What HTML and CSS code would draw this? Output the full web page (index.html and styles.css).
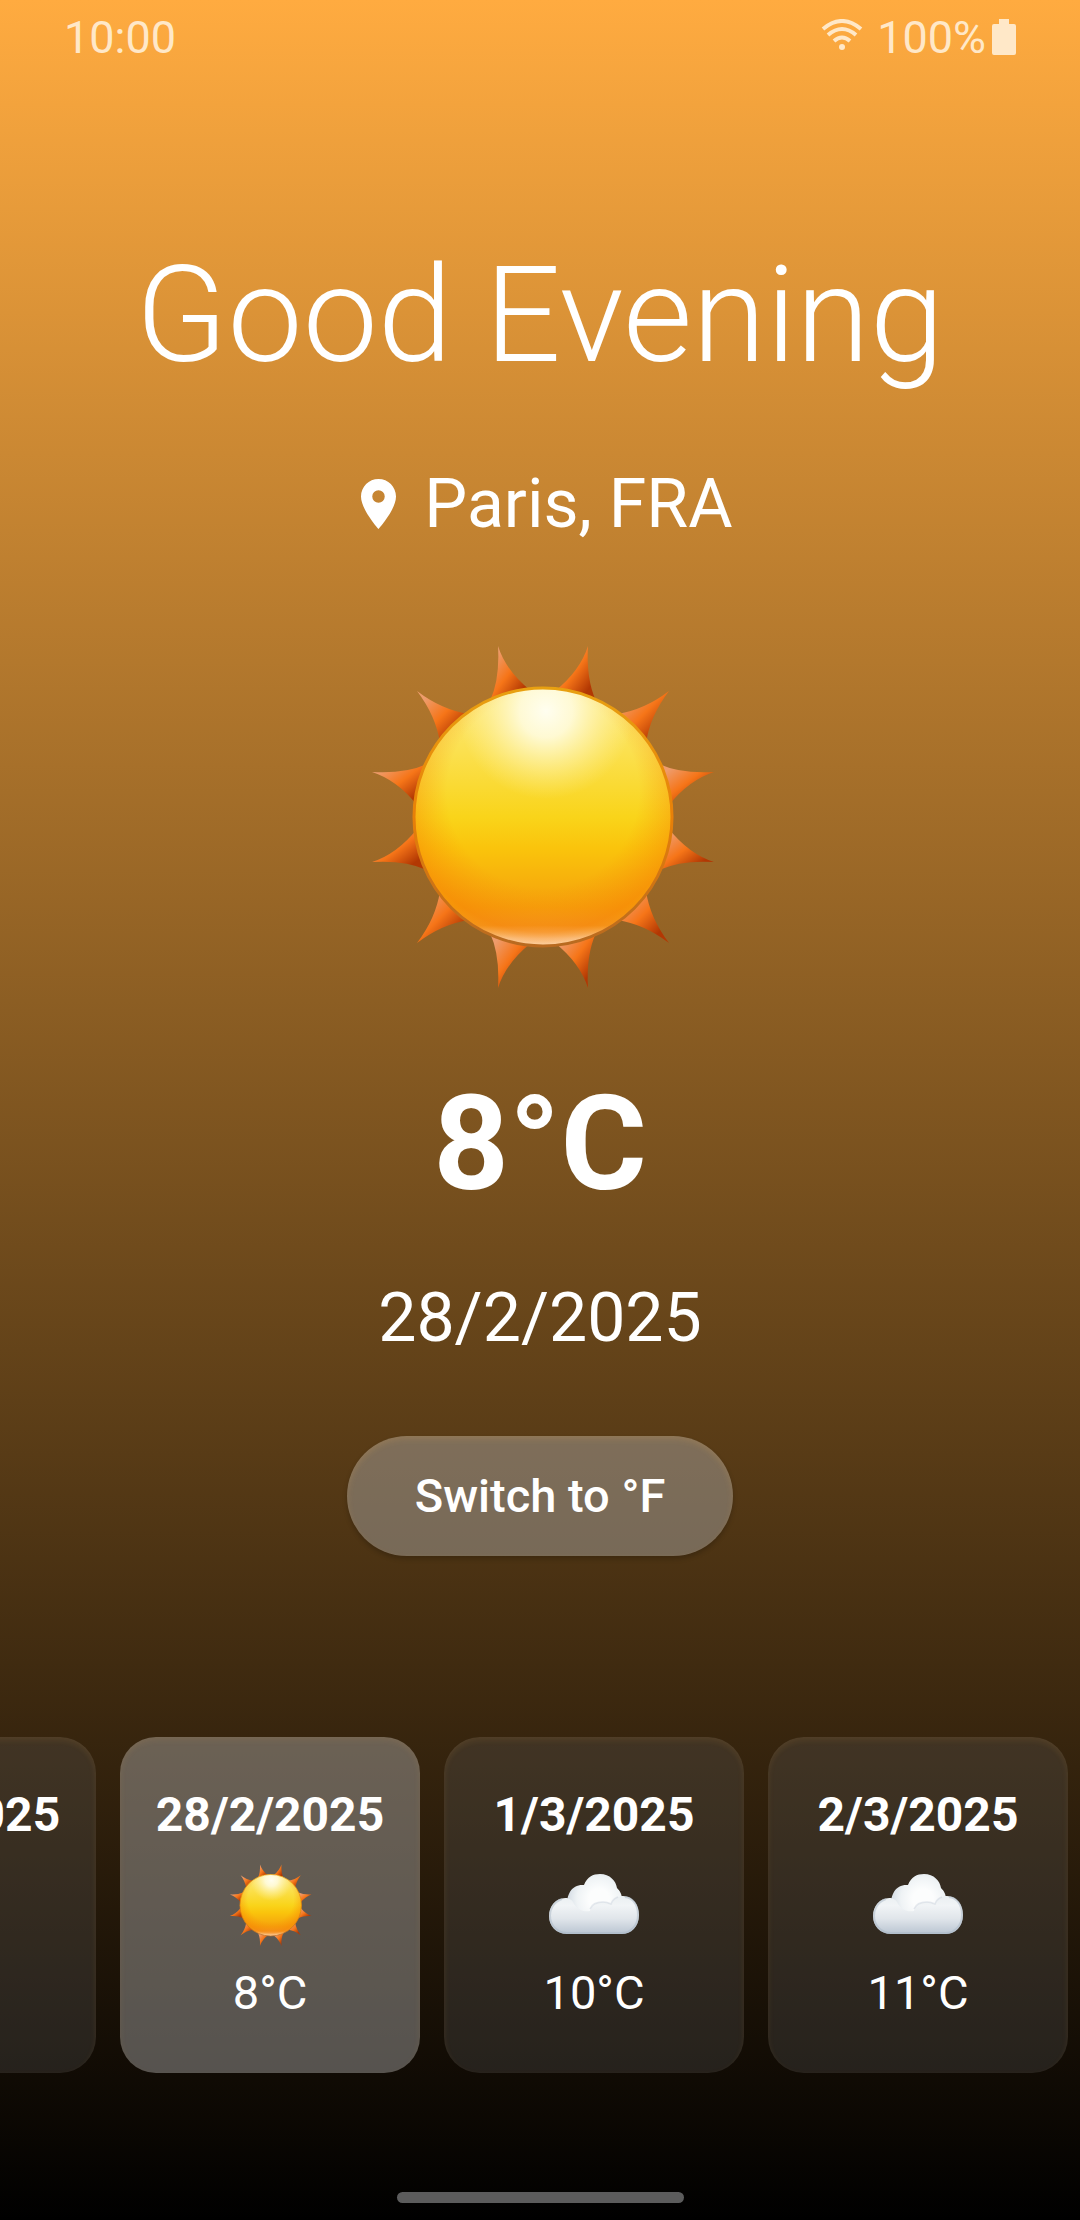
FILE: index.html
```html
<!DOCTYPE html>
<html lang="en">
<head>
<meta charset="utf-8">
<meta name="viewport" content="width=device-width, initial-scale=1">
<title>Weather</title>
<link rel="stylesheet" href="styles.css">
</head>
<body>
<svg class="defs" aria-hidden="true">
  <defs>
    <linearGradient id="ray" x1="0" y1="0" x2="1" y2="1">
      <stop offset="0.15" stop-color="#ee9c6c"/>
      <stop offset="0.48" stop-color="#f67518"/>
      <stop offset="0.8" stop-color="#b23803"/>
    </linearGradient>
    <linearGradient id="disc" x1="0" y1="0" x2="0" y2="1">
      <stop offset="0" stop-color="#fde87c"/>
      <stop offset="0.25" stop-color="#fbe04e"/>
      <stop offset="0.5" stop-color="#f9d41a"/>
      <stop offset="0.62" stop-color="#fac40c"/>
      <stop offset="0.85" stop-color="#f5a10c"/>
      <stop offset="0.92" stop-color="#f49a20"/>
      <stop offset="0.97" stop-color="#fcd0a0"/>
      <stop offset="1" stop-color="#fde0c0"/>
    </linearGradient>
    <radialGradient id="edge" cx="0.5" cy="0.4" r="0.62">
      <stop offset="0.6" stop-color="#f98a06" stop-opacity="0"/>
      <stop offset="0.88" stop-color="#f77f04" stop-opacity="0.5"/>
      <stop offset="1" stop-color="#f77f04" stop-opacity="0"/>
    </radialGradient>
    <radialGradient id="glow" gradientUnits="userSpaceOnUse" cx="3" cy="-106" r="88">
      <stop offset="0" stop-color="#fffef0"/>
      <stop offset="0.3" stop-color="#fffce0" stop-opacity="0.9"/>
      <stop offset="1" stop-color="#fff3a0" stop-opacity="0"/>
    </radialGradient>
    <linearGradient id="rim" x1="0" y1="0" x2="0" y2="1">
      <stop offset="0" stop-color="#e8a010"/>
      <stop offset="0.5" stop-color="#e88008"/>
      <stop offset="1" stop-color="#b86a20"/>
    </linearGradient>
    <radialGradient id="cloud-back" gradientUnits="userSpaceOnUse" cx="50" cy="25" r="34">
      <stop offset="0.3" stop-color="#fcfdfd"/>
      <stop offset="0.65" stop-color="#eff3f5"/>
      <stop offset="1" stop-color="#cfd8e1"/>
    </radialGradient>
    <linearGradient id="cloud-front" x1="0" y1="0" x2="0" y2="1">
      <stop offset="0" stop-color="#eaeff2"/>
      <stop offset="0.25" stop-color="#f1f4f6"/>
      <stop offset="0.6" stop-color="#e0e5ea"/>
      <stop offset="1" stop-color="#bac5d2"/>
    </linearGradient>
  </defs>
  <symbol id="sun" viewBox="-179 -177 352 352">
    <g fill="url(#ray)">
      <path d="M12-126Q37-146 45-171Q43-138 53-116Z"/>
      <path d="M74-103Q101-107 126-126Q107-101 103-74Z"/>
      <path d="M126-12Q146-37 171-45Q138-43 116-53Z"/>
      <path d="M126 12Q146 37 171 45Q138 43 116 53Z"/>
      <path d="M74 103Q101 107 126 126Q107 101 103 74Z"/>
      <path d="M12 126Q37 146 45 171Q43 138 53 116Z"/>
      <path d="M-12 126Q-37 146-45 171Q-43 138-53 116Z"/>
      <path d="M-74 103Q-101 107-126 126Q-107 101-103 74Z"/>
      <path d="M-126 12Q-146 37-171 45Q-138 43-116 53Z"/>
      <path d="M-126-12Q-146-37-171-45Q-138-43-116-53Z"/>
      <path d="M-74-103Q-101-107-126-126Q-107-101-103-74Z"/>
      <path d="M-12-126Q-37-146-45-171Q-43-138-53-116Z"/>
    </g>
    <circle r="129" fill="url(#disc)"/>
    <circle r="129" fill="url(#edge)"/>
    <circle r="129" fill="url(#glow)"/>
    <circle r="129" fill="none" stroke="url(#rim)" stroke-width="3"/>
  </symbol>
  <symbol id="cloud" viewBox="0 0 90 62">
    <path fill="url(#cloud-back)" d="M18 34C17 20 23 10 35 11C38 3 44 0 51 0C61 0 67 7 68 14C71 17 73 20 73 26L70 44H22Z"/>
    <path fill="url(#cloud-front)" d="M0 42C0 32 7 23 18 24C22 25 24 27 25 30C30 37 36 38 41 37C42 31 48 28 54 28Q59 28 62 30C65 24 70 22 74 22C84 22 90 31 90 41C90 53 82 60 73 60H18C7 60 0 52 0 42Z"/>
    <path fill="none" stroke="#cbd4dd" stroke-opacity="0.5" stroke-width="1.500" d="M41 35C43 30 48 28 54 28Q58 28 62 30C63 27 66 24 69 23"/>
    <path fill="none" stroke="#aab7c6" stroke-opacity="0.5" stroke-width="2" d="M76 23C85 24 89 32 89 41C89 52 81 59 73 59H18C8 59 1 51 1 42C1 34 6 27 13 25"/>
  </symbol>
</svg>
<header class="status">
  <time class="clock">10:00</time>
  <div class="system">
    <svg class="wifi" viewBox="0 0 42 32" fill="none" stroke="currentColor" stroke-width="4">
      <path d="M2 10Q21-6 40 10"/><path d="M7 16Q21 4 35 16"/><path d="M13 22Q21 15 29 22"/>
      <circle cx="21" cy="28" r="3" fill="currentColor" stroke="none"/>
    </svg>
    <span>100%</span>
    <svg class="battery" viewBox="0 0 24 36" fill="currentColor"><path d="M7 0H17V5H22Q24 5 24 7V34Q24 36 22 36H2Q0 36 0 34V7Q0 5 2 5H7Z"/></svg>
  </div>
</header>
<main class="weather">
  <h1 class="greeting">Good Evening</h1>
  <p class="place">
    <svg class="pin" viewBox="5 2 14 20" fill="currentColor"><path d="M12 2C8.130 2 5 5.130 5 9c0 5.250 7 13 7 13s7-7.750 7-13c0-3.870-3.130-7-7-7zm0 9.500a2.500 2.500 0 1 1 0-5 2.500 2.500 0 0 1 0 5z"/></svg>
    <span>Paris, FRA</span>
  </p>
  <svg class="sky" role="img" aria-label="Sunny"><use href="#sun"/></svg>
  <p class="temperature">8°C</p>
  <time class="date">28/2/2025</time>
  <button class="switch" type="button">Switch to °F</button>
</main>
<ul class="days">
  <li class="day"><time class="day-date">27/2/2025</time></li>
  <li class="day selected"><time class="day-date">28/2/2025</time><svg class="day-icon" role="img" aria-label="Sunny"><use href="#sun"/></svg><span>8°C</span></li>
  <li class="day"><time class="day-date">1/3/2025</time><svg class="day-icon wide" role="img" aria-label="Cloudy"><use href="#cloud"/></svg><span>10°C</span></li>
  <li class="day"><time class="day-date">2/3/2025</time><svg class="day-icon wide" role="img" aria-label="Cloudy"><use href="#cloud"/></svg><span>11°C</span></li>
</ul>
<footer class="nav"><span class="handle"></span></footer>
</body>
</html>
```
FILE: styles.css
```css
* {
  box-sizing: border-box;
}

body {
  display: flex;
  flex-direction: column;
  min-height: 100vh;
  margin: 0;
  overflow-x: hidden;
  background: linear-gradient(#ffab40, #000);
  color: #fff;
  font: 47px/56px Roboto, sans-serif;
}

h1,
p,
ul {
  margin: 0;
  padding: 0;
}

.defs {
  position: absolute;
  width: 0;
  height: 0;
}

.status {
  display: flex;
  justify-content: space-between;
  align-items: center;
  height: 76px;
  padding: 0 64px;
  color: #ffe8c8;
  font-size: 45px;
}

.system {
  display: flex;
  align-items: center;
  gap: 6px;
}

.wifi {
  width: 42px;
  height: 32px;
  margin: 0 8px 6px 0;
}

.battery {
  width: 24px;
  height: 36px;
  margin-bottom: 2px;
}

.weather {
  display: flex;
  flex-direction: column;
  align-items: center;
  padding-top: 162px;
}

.greeting {
  font-size: 134px;
  font-weight: 300;
  line-height: 156px;
}

.place {
  display: flex;
  align-items: center;
  gap: 28px;
  margin-top: 70px;
  padding-left: 14px;
  font-size: 68px;
  line-height: 80px;
}

.pin {
  width: 35px;
  height: 50px;
}

.sky {
  width: 352px;
  height: 352px;
  margin-top: 96px;
}

.temperature {
  margin-top: 74px;
  font-size: 132px;
  font-weight: 700;
  line-height: 156px;
}

.date {
  margin-top: 56px;
  font-size: 68px;
  line-height: 80px;
}

.switch {
  height: 120px;
  margin-top: 78px;
  padding: 0 68px;
  border: 0;
  border-radius: 60px;
  background: linear-gradient(rgba(255, 255, 255, 0.3), rgba(255, 255, 255, 0.3)) rgba(0, 0, 0, 0.2);
  box-shadow: 0 3px 5px rgba(0, 0, 0, 0.2), inset 0 3px 6px rgba(255, 180, 80, 0.16);
  color: inherit;
  font: 500 47px/56px Roboto, sans-serif;
}

.days {
  display: flex;
  gap: 24px;
  margin: 181px 0 0 -204px;
  list-style: none;
}

.day {
  display: flex;
  flex: none;
  flex-direction: column;
  align-items: center;
  width: 300px;
  height: 336px;
  padding-top: 50px;
  border-radius: 36px;
  background: linear-gradient(rgba(255, 255, 255, 0.1), rgba(255, 255, 255, 0.1)) rgba(0, 0, 0, 0.2);
  box-shadow: inset 0 3px 6px rgba(255, 180, 80, 0.1);
}

.selected {
  background-image: linear-gradient(rgba(255, 255, 255, 0.3), rgba(255, 255, 255, 0.3));
}

.day-date {
  font-size: 48px;
  font-weight: 700;
}

.day-icon {
  width: 84px;
  height: 84px;
  margin: 20px 0 18px;
}

.wide {
  width: 90px;
}

.nav {
  display: flex;
  justify-content: center;
  margin-top: auto;
  padding-bottom: 17px;
}

.handle {
  width: 287px;
  height: 11px;
  border-radius: 6px;
  background: #5c5c5c;
}
```
